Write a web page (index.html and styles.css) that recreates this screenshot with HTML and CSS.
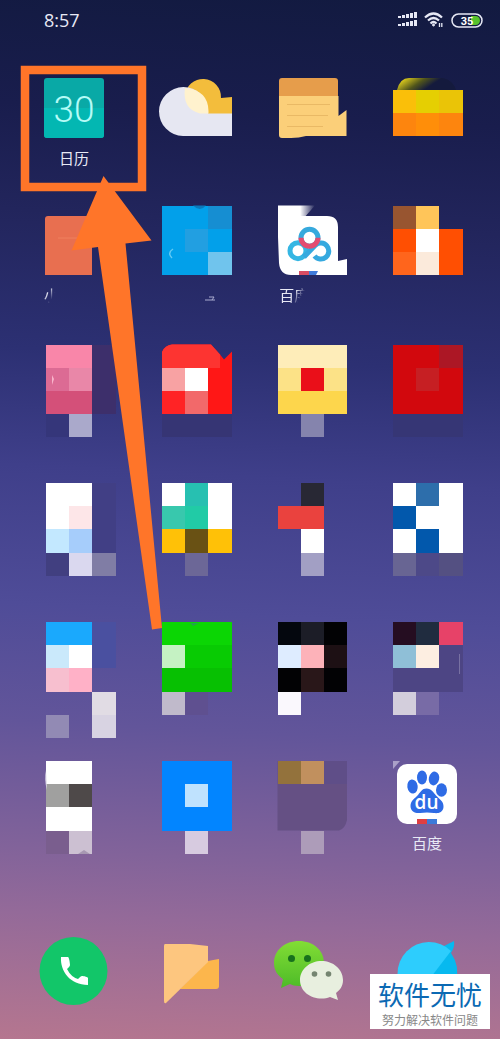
FILE: index.html
```html
<!DOCTYPE html>
<html lang="zh-CN">
<head>
    <meta charset="UTF-8">
    <meta name="viewport" content="width=device-width, initial-scale=1.0">
    <title>桌面</title>
    <link rel="stylesheet" href="styles.css">
</head>
<body>
    <header class="status-bar">
        <time class="clock">8:57</time>
        <div class="status-icons">
            <svg width="19" height="16" viewBox="0 0 19 16" fill="#e6e8f5">
                <path d="M0 4h3v2H0zM4 3h3v3H4zM8 2h3v4H8zM12 1h3v5h-3zM16 0h3v6h-3z"/>
                <path d="M0 12h3v2H0zM4 11h3v3H4zM8 10h3v4H8zM12 9h3v5h-3zM16 8h3v6h-3z"/>
            </svg>
            <svg width="20" height="16" viewBox="0 0 20 16" fill="none" stroke="#e6e8f5" stroke-width="2.200">
                <path d="M1 5.500Q9.500-2.500 18 5.500M4 8.500Q9.500 3.500 15 8.500M6.500 11.500Q9.500 8.500 12.500 11.500"/>
                <circle cx="9.500" cy="13" r="1" fill="#e6e8f5" stroke-width="1"/>
                <path d="M15.500 11v4M17.800 11v4" stroke-width="1.300"/>
            </svg>
            <svg class="battery" width="32" height="15" viewBox="0 0 32 15">
                <rect x="1" y="1" width="30" height="13" rx="6.500" fill="none" stroke="#e6e8f5" stroke-width="1.500"/>
                <path d="M20 3h4.500a4.500 4.500 0 0 1 0 9H20z" fill="#57c22d"/>
                <text x="16" y="11.500" text-anchor="middle">35</text>
            </svg>
        </div>
    </header>

    <main class="apps">
        <!-- row 1 -->
        <button class="app">
            <svg viewBox="0 0 60 60">
                <rect width="60" height="60" rx="3" fill="#09a9a6"/>
                <path d="M0 30h60v27a3 3 0 0 1-3 3H3a3 3 0 0 1-3-3z" fill="#03b7b2"/>
                <text class="day" x="30" y="44" text-anchor="middle">30</text>
            </svg>
            <span class="label">日历</span>
        </button>
        <button class="app" aria-label="天气">
            <svg viewBox="0 0 60 60">
                <path d="M23 18a18 18 0 1 1 36 2l11-1v17H36z" fill="#f3bd3c"/>
                <path d="M21 58a24.500 24.500 0 1 1 25-25v2.500h24V58z" fill="#e6e7f2"/>
                <path d="M23 10q23 2 23.500 23v2.500H38Q20 31 23 10z" fill="#fff2ce"/>
            </svg>
        </button>
        <button class="app" aria-label="便签">
            <svg viewBox="0 0 60 60">
                <path d="M0 18h59.500v20l8-6v26H27q-7 2-15 2H3q-3 0-3-3z" fill="#fbcf79"/>
                <path d="M0 18V3q0-3 3-3h53q3 0 3 3v15z" fill="#e69d4b"/>
                <path d="M8 26.500h43M8 37.500h41M8 48.500h36" stroke="#e9b965"/>
            </svg>
        </button>
        <button class="app" aria-label="文件">
            <svg viewBox="0 0 60 60">
                <defs>
                    <linearGradient id="fade" x1="0" y1="0" x2="1" y2="0.300">
                        <stop offset="0.100" stop-color="#e8d51c"/>
                        <stop offset="0.450" stop-color="#51551b"/>
                        <stop offset="0.700" stop-color="#141a3d"/>
                    </linearGradient>
                </defs>
                <path d="M0 12Q3 0 12 0h34q10 2 13 12z" fill="url(#fade)"/>
                <g transform="translate(-4 -11.500) scale(23.200)" shape-rendering="crispEdges">
                    <path d="M0 1h1v1H0z" fill="#fabf09"/>
                    <path d="M1 1h1v1H1z" fill="#e5cf02"/>
                    <path d="M2 1h1v1H2z" fill="#eac407"/>
                    <path d="M0 2h3v1H0z" fill="#fd850e"/>
                    <path d="M1 2h1v1H1z" fill="#ff8e09"/>
                </g>
            </svg>
        </button>

        <!-- row 2 -->
        <button class="app">
            <svg viewBox="0 0 60 60">
                <path d="M1 4q0-3 3-3h44v59H1z" fill="#e86f50"/>
                <path d="M14 23h25" stroke="#ef815e"/>
            </svg>
            <span class="label label-cut-short">小</span>
        </button>
        <button class="app" aria-label="应用">
            <svg viewBox="0 0 60 60">
                <g transform="translate(0 -9.500) scale(23.200)" shape-rendering="crispEdges">
                    <path d="M0 0h3v3H0z" fill="#02a0ea"/>
                    <path d="M2 0h1v1H2z" fill="#168ed2"/>
                    <path d="M1 1h1v1H1z" fill="#229fe1"/>
                    <path d="M2 2h1v1H2z" fill="#70c4ed"/>
                </g>
                <path d="M31-9.500h13q-6 7-13 0z" fill="#0b79bb"/>
                <path d="M11 34q-6 4-1 9" fill="none" stroke="#63c9f3" stroke-width="1.500"/>
                <path d="M43 85h10M47 82h5l-2 3" fill="none" stroke="#a9abd0"/>
            </svg>
        </button>
        <button class="app">
            <svg viewBox="0 0 60 60">
                <defs>
                    <linearGradient id="corner" x1="0" y1="0" x2="1" y2="0">
                        <stop offset="0.600" stop-color="#fff"/>
                        <stop offset="1" stop-color="#fff" stop-opacity="0"/>
                    </linearGradient>
                </defs>
                <path d="M-1-9.500h37L24 4 0 22h-1z" fill="url(#corner)"/>
                <path d="M0 1h48q11 0 11 11v34l9-2v16H12Q1 60 0 48L-1 22z" fill="#fff"/>
                <g fill="none" stroke-width="5">
                    <circle cx="19" cy="35.700" r="8" stroke="#35b6e3"/>
                    <path d="M25 42L36.500 30a8 8 0 1 1-1 11" stroke="#35a9df"/>
                    <circle cx="30.500" cy="22.700" r="8.500" stroke="#36a9dd"/>
                    <path d="M22 22.700a8.500 8.500 0 0 0 17 0" stroke="#e44b70"/>
                </g>
                <path d="M20 56h10v4H20z" fill="#d94c63"/>
                <path d="M30 56h9l-2 4h-7z" fill="#3f7bdc"/>
            </svg>
            <span class="label label-cut">百度</span>
        </button>
        <button class="app" aria-label="应用">
            <svg viewBox="0 0 60 60">
                <g transform="translate(-4 -9.500) scale(23.200)" shape-rendering="crispEdges">
                    <path d="M0 0h1v1H0z" fill="#985530"/>
                    <path d="M1 0h1v1H1z" fill="#ffc559"/>
                    <path d="M0 1h3v2H0z" fill="#ff4f02"/>
                    <path d="M1 1h1v1H1z" fill="#fff"/>
                    <path d="M0 2h1v1H0z" fill="#ff651c"/>
                    <path d="M1 2h1v1H1z" fill="#fbeadb"/>
                </g>
            </svg>
        </button>

        <!-- row 3 -->
        <button class="app" aria-label="应用">
            <svg viewBox="0 0 60 60">
                <g transform="translate(2 -7.500) scale(23.200)" shape-rendering="crispEdges">
                    <path d="M0 0h2v1H0z" fill="#f986a9"/>
                    <path d="M0 1h1v1H0z" fill="#dc6b94"/>
                    <path d="M1 1h1v1H1z" fill="#e987a8"/>
                    <path d="M0 2h2v1H0z" fill="#d45079"/>
                    <path d="M2 0h1v3H2z" fill="#3d2f6b"/>
                    <path d="M0 3h1v1H0z" fill="#35367a"/>
                    <path d="M1 3h1v1H1z" fill="#aaa9cb"/>
                </g>
                <path d="M8 23l2 4-2 6z" fill="#f9b4cb"/>
            </svg>
        </button>
        <button class="app" aria-label="应用">
            <svg viewBox="0 0 60 60">
                <path d="M0 0q3-7 10-7.500h39l9 10 4 5 8-8v62.500H0z" fill="#ff1716"/>
                <path d="M0 0q3-7 10-7.500h39l9 10v13.500H0z" fill="#fd3431"/>
                <g transform="translate(0 -7.500) scale(23.200)" shape-rendering="crispEdges">
                    <path d="M0 1h1v1H0z" fill="#f8a2a3"/>
                    <path d="M1 1h1v1H1z" fill="#fff"/>
                    <path d="M0 2h1v1H0z" fill="#ff2325"/>
                    <path d="M1 2h1v1H1z" fill="#f2696a"/>
                    <path d="M0 3h3v1H0z" fill="#363574"/>
                </g>
            </svg>
        </button>
        <button class="app" aria-label="应用">
            <svg viewBox="0 0 60 60">
                <g transform="translate(-1.500 -7.500) scale(23.200)" shape-rendering="crispEdges">
                    <path d="M0 0h3v1H0z" fill="#feedb9"/>
                    <path d="M0 1h3v1H0z" fill="#fce287"/>
                    <path d="M0 2h3v1H0z" fill="#fdd64c"/>
                    <path d="M1 1h1v1H1z" fill="#ea0f19"/>
                    <path d="M1 3h1v1H1z" fill="#8584ad"/>
                </g>
            </svg>
        </button>
        <button class="app" aria-label="应用">
            <svg viewBox="0 0 60 60">
                <g transform="translate(-4 -7.500) scale(23.200)" shape-rendering="crispEdges">
                    <path d="M0 0h3v3H0z" fill="#d2080d"/>
                    <path d="M2 0h1v1H2z" fill="#ac1725"/>
                    <path d="M1 1h1v1H1z" fill="#c61f23"/>
                    <path d="M0 3h3v1H0z" fill="#363675"/>
                </g>
            </svg>
        </button>

        <!-- row 4 -->
        <button class="app" aria-label="应用">
            <svg viewBox="0 0 60 60">
                <g transform="translate(2 -6) scale(23.200)" shape-rendering="crispEdges">
                    <path d="M0 0h2v2H0z" fill="#fff"/>
                    <path d="M1 1h1v1H1z" fill="#fde6e8"/>
                    <path d="M0 2h1v1H0z" fill="#c3e8ff"/>
                    <path d="M1 2h1v1H1z" fill="#a6cdfb"/>
                    <path d="M2 0h1v3H2z" fill="#413f85"/>
                    <path d="M0 3h1v1H0z" fill="#413f80"/>
                    <path d="M1 3h1v1H1z" fill="#dad8ef"/>
                    <path d="M2 3h1v1H2z" fill="#807da5"/>
                </g>
            </svg>
        </button>
        <button class="app" aria-label="应用">
            <svg viewBox="0 0 60 60">
                <g transform="translate(0 -6) scale(23.200)" shape-rendering="crispEdges">
                    <path d="M0 0h3v2H0z" fill="#fff"/>
                    <path d="M1 0h1v1H1z" fill="#27c0b1"/>
                    <path d="M0 1h1v1H0z" fill="#38c8ad"/>
                    <path d="M1 1h1v1H1z" fill="#21cba6"/>
                    <path d="M0 2h3v1H0z" fill="#ffc107"/>
                    <path d="M1 2h1v1H1z" fill="#695114"/>
                    <path d="M1 3h1v1H1z" fill="#6c6797"/>
                </g>
            </svg>
        </button>
        <button class="app" aria-label="应用">
            <svg viewBox="0 0 60 60">
                <g transform="translate(-1.500 -6) scale(23.200)" shape-rendering="crispEdges">
                    <path d="M1 0h1v1H1z" fill="#282834"/>
                    <path d="M0 1h2v1H0z" fill="#ea423e"/>
                    <path d="M1 2h1v1H1z" fill="#fff"/>
                    <path d="M1 3h1v1H1z" fill="#a29fc4"/>
                </g>
            </svg>
        </button>
        <button class="app" aria-label="应用">
            <svg viewBox="0 0 60 60">
                <g transform="translate(-4 -6) scale(23.200)" shape-rendering="crispEdges">
                    <path d="M0 0h3v3H0z" fill="#fff"/>
                    <path d="M1 0h1v1H1z" fill="#2d6eab"/>
                    <path d="M0 1h1v1H0zM1 2h1v1H1z" fill="#0258ac"/>
                    <path d="M0 3h1v1H0z" fill="#686593"/>
                    <path d="M1 3h1v1H1z" fill="#4d4988"/>
                    <path d="M2 3h1v1H2z" fill="#545082"/>
                </g>
            </svg>
        </button>

        <!-- row 5 -->
        <button class="app" aria-label="应用">
            <svg viewBox="0 0 60 60">
                <g transform="translate(2 -4) scale(23.200)" shape-rendering="crispEdges">
                    <path d="M0 0h2v1H0z" fill="#1aa9fd"/>
                    <path d="M0 1h1v1H0z" fill="#cae9fb"/>
                    <path d="M1 1h1v1H1z" fill="#fff"/>
                    <path d="M2 0h1v2H2z" fill="#4a50a0"/>
                    <path d="M0 2h1v1H0z" fill="#f7bfcf"/>
                    <path d="M1 2h1v1H1z" fill="#ffb1c7"/>
                    <path d="M2 3h1v1H2z" fill="#e1dce4"/>
                    <path d="M2 4h1v1H2z" fill="#d8d3e2"/>
                    <path d="M0 4h1v1H0z" fill="#928ab4"/>
                </g>
            </svg>
        </button>
        <button class="app" aria-label="应用">
            <svg viewBox="0 0 60 60">
                <g transform="translate(0 -4) scale(23.200)" shape-rendering="crispEdges">
                    <path d="M0 0h3v1H0z" fill="#0bd604"/>
                    <path d="M1 1h2v1H1z" fill="#08cb03"/>
                    <path d="M0 1h1v1H0z" fill="#c5f2c3"/>
                    <path d="M0 2h3v1H0z" fill="#07c002"/>
                    <path d="M0 3h1v1H0z" fill="#c0bacb"/>
                    <path d="M1 3h1v1H1z" fill="#5f5090"/>
                </g>
                <path d="M28-3h9l-6 3z" fill="#23a44a"/>
            </svg>
        </button>
        <button class="app" aria-label="应用">
            <svg viewBox="0 0 60 60">
                <g transform="translate(-1.500 -4) scale(23.200)" shape-rendering="crispEdges">
                    <path d="M0 0h3v3H0z" fill="#020204"/>
                    <path d="M0 0h1v1H0z" fill="#04070e"/>
                    <path d="M1 0h1v1H1z" fill="#1c1d27"/>
                    <path d="M0 1h1v1H0z" fill="#deecff"/>
                    <path d="M1 1h1v1H1z" fill="#fdb2b9"/>
                    <path d="M2 1h1v1H2z" fill="#1d1014"/>
                    <path d="M1 2h1v1H1z" fill="#291719"/>
                    <path d="M0 3h1v1H0z" fill="#faf8fd"/>
                </g>
            </svg>
        </button>
        <button class="app" aria-label="应用">
            <svg viewBox="0 0 60 60">
                <g transform="translate(-4 -4) scale(23.200)" shape-rendering="crispEdges">
                    <path d="M0 1h3v2H0z" fill="#4d4584"/>
                    <path d="M0 0h1v1H0z" fill="#250d21"/>
                    <path d="M1 0h1v1H1z" fill="#202c3f"/>
                    <path d="M2 0h1v1H2z" fill="#e74268"/>
                    <path d="M0 1h1v1H0z" fill="#8fbfd7"/>
                    <path d="M1 1h1v1H1z" fill="#fdeee1"/>
                    <path d="M0 3h1v1H0z" fill="#d3cedc"/>
                    <path d="M1 3h1v1H1z" fill="#786ba6"/>
                </g>
                <path d="M62.500 28v20" stroke="#7871a2"/>
            </svg>
        </button>

        <!-- row 6 -->
        <button class="app" aria-label="应用">
            <svg viewBox="0 0 60 60">
                <g transform="translate(2 -2) scale(23.200)" shape-rendering="crispEdges">
                    <path d="M0 0h2v3H0z" fill="#fff"/>
                    <path d="M0 1h1v1H0z" fill="#a0a09f"/>
                    <path d="M1 1h1v1H1z" fill="#4e4949"/>
                    <path d="M0 3h1v1H0z" fill="#7a5e8e"/>
                    <path d="M1 3h1v1H1z" fill="#ccc0d2"/>
                </g>
                <path d="M2 7q-2 10 1 20z" fill="#d9d5e5"/>
                <path d="M34 91l6-4 6 4z" fill="#a798b2"/>
            </svg>
        </button>
        <button class="app" aria-label="应用">
            <svg viewBox="0 0 60 60">
                <g transform="translate(0 -2) scale(23.200)" shape-rendering="crispEdges">
                    <path d="M0 0h3v3H0z" fill="#0285ff"/>
                    <path d="M1 1h1v1H1z" fill="#bfe2fe"/>
                    <path d="M1 3h1v1H1z" fill="#d7cbe0"/>
                </g>
            </svg>
        </button>
        <button class="app" aria-label="应用">
            <svg viewBox="0 0 60 60">
                <path d="M-1.500-2h69.500v59q-2 9-8 10.500H-1.500z" fill="#655084"/>
                <g transform="translate(-1.500 -2) scale(23.200)" shape-rendering="crispEdges">
                    <path d="M0 0h1v1H0z" fill="#93723c"/>
                    <path d="M1 0h1v1H1z" fill="#c1905e"/>
                    <path d="M2 0h1v1H2z" fill="#5f4e88"/>
                    <path d="M1 3h1v1H1z" fill="#ad9cb9"/>
                </g>
            </svg>
        </button>
        <button class="app">
            <svg viewBox="0 0 60 60">
                <path d="M-4-2h7l-7 8z" fill="#aaa0c8"/>
                <rect x="0" y="1" width="60" height="60" rx="10" fill="#fff"/>
                <g fill="#2e6be5">
                    <ellipse cx="15.500" cy="23.500" rx="5.200" ry="7" transform="rotate(-8 15.500 23.500)"/>
                    <ellipse cx="25" cy="14.500" rx="5" ry="7"/>
                    <ellipse cx="37" cy="15.500" rx="5.200" ry="7" transform="rotate(12 37 15.500)"/>
                    <ellipse cx="44.500" cy="27" rx="5.500" ry="6.700"/>
                    <path d="M29.500 25.500c5 0 7 4 9.500 7s8 5.500 7.500 11.500c-.5 6-6 6.500-9.500 6-5-.8-9-.8-14 0-4 .6-9.500-1-9.500-7s5-8 7.500-11 4-6.500 8.500-6.500z"/>
                </g>
                <text class="du" x="29.500" y="46" text-anchor="middle">du</text>
                <path d="M20 56h10v5H20z" fill="#df3f43"/>
                <path d="M30 56h10v5H30z" fill="#3c7ad9"/>
            </svg>
            <span class="label">百度</span>
        </button>
    </main>

    <nav class="dock">
        <button class="app" aria-label="电话">
            <svg viewBox="0 0 60 60">
                <circle cx="29.500" cy="30" r="34" fill="#12c669"/>
                <path d="M17 16h7c1 0 2 6 2 8 0 1-1 2-3 4q4 8 11 10c2-2 3-3 4-3 2 0 6 1 6 2v7C26 44 16 30 17 16z" fill="#fff"/>
            </svg>
        </button>
        <button class="app" aria-label="短信">
            <svg viewBox="0 0 60 60">
                <path d="M46 20q5-1 11-2v27q0 3-3 3H18z" fill="#fcb64c"/>
                <path d="M3 3h25l18 2v16L4 62q-2 1-2-2V5q0-2 1-2z" fill="#fdc67f"/>
            </svg>
        </button>
        <button class="app" aria-label="微信">
            <svg viewBox="0 0 60 60">
                <defs>
                    <linearGradient id="leaf" x1="0" y1="0" x2="0" y2="1">
                        <stop offset="0" stop-color="#82dd35"/>
                        <stop offset="1" stop-color="#4dbb28"/>
                    </linearGradient>
                </defs>
                <path d="M20 0c14 0 25 9 25 22S34 45 20 45c-4 0-7-1-9-2l-9 4 2-9c-6-4-9-9-9-16C-5 9 6 0 20 0z" fill="url(#leaf)"/>
                <circle cx="12.500" cy="17.500" r="3.500" fill="#17701d"/>
                <circle cx="28.500" cy="17.500" r="3.500" fill="#17701d"/>
                <path d="M42.500 20C54 20 64 28 64 39c0 6-3 10-7 13l2 7-8-3c-3 1-5 1.500-8.500 1.500C31 57.500 21 50 21 39s10-19 21.500-19z" fill="#e8efdf"/>
                <circle cx="35.500" cy="33" r="2.800" fill="#758571"/>
                <circle cx="49.500" cy="33" r="2.800" fill="#758571"/>
            </svg>
        </button>
        <button class="app" aria-label="浏览器">
            <svg viewBox="0 0 60 60">
                <path d="M47 5q6-3 10-5 1 6-3 12 9 13 5 28-10 21-29 21V30z" fill="#07b9ef"/>
                <path d="M54 10L31 40 10 55A31 31 0 1 1 54 10z" fill="#2dcdfd"/>
            </svg>
        </button>
    </nav>

    <!-- highlight frame and arrow over the calendar icon -->
    <svg class="pointer" width="170" height="640" viewBox="0 0 170 640">
        <rect x="25" y="70" width="117" height="117" fill="none" stroke="#ff7529" stroke-width="8.500"/>
        <path d="M103.500 176L151.500 240.500 125.500 243.500 162 628 152 629.500 98 247 71.500 250.500z" fill="#ff7529"/>
    </svg>

    <aside class="watermark">
        <strong>软件无忧</strong>
        <span>努力解决软件问题</span>
    </aside>
</body>
</html>
```
FILE: styles.css
```css
* {
    box-sizing: border-box;
}
body {
    position: relative;
    display: flex;
    flex-direction: column;
    min-height: 100vh;
    margin: 0;
    font-family: 'Open Sans', 'Noto Sans CJK SC', sans-serif;
    color: #e8e9f5;
    background: linear-gradient(183deg, #121a40 0%, #191d4d 12%, #22255c 22%, #2c3073 35%, #3f3f8a 46%, #4f4c98 59%, #62559a 70%, #82639a 82%, #946a99 88%, #b5768f 100%);
    overflow-x: hidden;
}
.status-bar {
    display: flex;
    justify-content: space-between;
    align-items: center;
    height: 40px;
    padding: 0 17px 0 44px;
}
.clock {
    font-size: 18px;
    line-height: 24px;
}
.status-icons {
    display: flex;
    align-items: center;
    gap: 7px;
}
.battery text {
    font: bold 11px 'Roboto', sans-serif;
    fill: #fff;
}
.apps,
.dock {
    display: grid;
    grid-template-columns: repeat(4, 60px);
    justify-content: space-between;
    padding: 0 43px 0 44px;
}
.apps {
    grid-auto-rows: 137px;
    margin-top: 38px;
}
.dock {
    margin-top: auto;
    padding-bottom: 38px;
}
.app {
    display: flex;
    flex-direction: column;
    align-items: center;
    padding: 0;
    border: none;
    background: none;
    color: inherit;
    font-family: inherit;
    cursor: pointer;
}
.app svg {
    width: 60px;
    height: 60px;
    overflow: visible;
}
.label {
    margin-top: 10px;
    font-size: 15px;
    line-height: 20px;
}
.label-cut,
.label-cut-short {
    align-self: flex-start;
}
.label-cut {
    -webkit-mask-image: linear-gradient(120deg, #000 50%, transparent 70%);
    mask-image: linear-gradient(120deg, #000 50%, transparent 70%);
}
.label-cut-short {
    -webkit-mask-image: linear-gradient(120deg, #000 30%, transparent 60%);
    mask-image: linear-gradient(120deg, #000 30%, transparent 60%);
}
.day {
    font: 300 37px 'Roboto', sans-serif;
    fill: #b5fbf6;
}
.du {
    font: 600 19px 'Open Sans', sans-serif;
    fill: #fff;
}
.pointer {
    position: absolute;
    top: 0;
    left: 0;
    pointer-events: none;
}
.watermark {
    position: absolute;
    right: 10px;
    bottom: 10px;
    display: flex;
    flex-direction: column;
    align-items: center;
    padding: 1px 8px;
    background: #fff;
    font-family: 'Noto Sans CJK SC', sans-serif;
}
.watermark strong {
    font-size: 26px;
    font-weight: 400;
    line-height: 37px;
    color: #0b69b3;
}
.watermark span {
    font-size: 12px;
    line-height: 16px;
    color: #888;
}
```
